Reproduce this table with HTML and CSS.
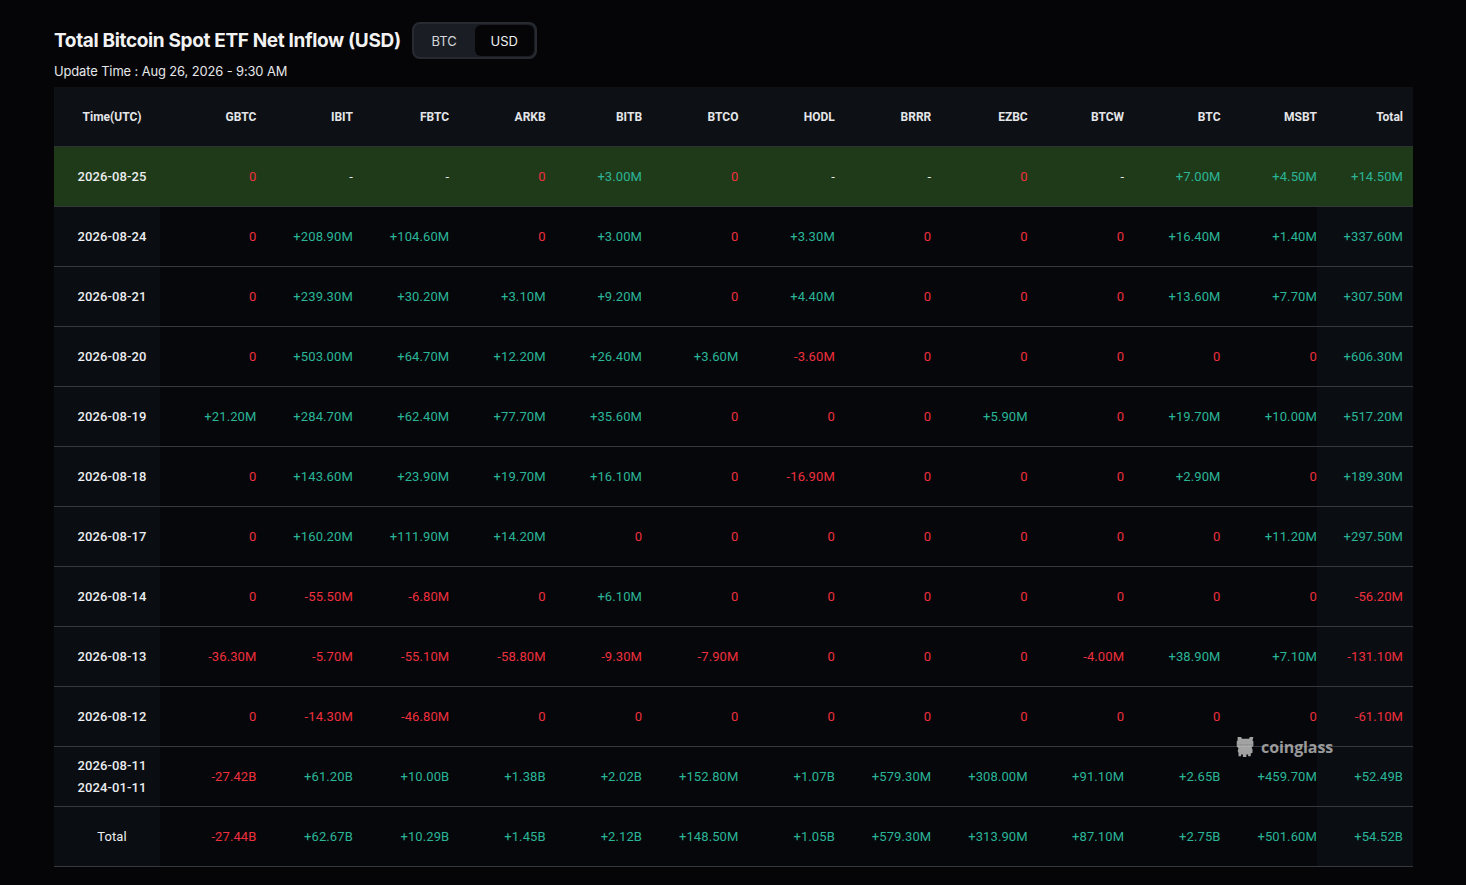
FILE: index.html
```html
<!DOCTYPE html>
<html lang="en">
<head>
<meta charset="utf-8">
<title>Total Bitcoin Spot ETF Net Inflow (USD)</title>
<link rel="stylesheet" href="styles.css">
</head>
<body>
<div class="page">
  <div class="head">
    <h1 class="title">Total Bitcoin Spot ETF Net Inflow (USD)</h1>
    <div class="toggle">
      <span class="opt">BTC</span>
      <span class="opt active">USD</span>
    </div>
  </div>
  <div class="update">Update Time : Aug 26, 2026 - 9:30 AM</div>
  <div class="table-wrap">
    <table class="etf">
      <colgroup>
        <col class="c-time">
        <col span="12" class="c-fund">
        <col class="c-total">
      </colgroup>
      <thead>
        <tr>
          <th class="time">Time(UTC)</th>
          <th>GBTC</th><th>IBIT</th><th>FBTC</th><th>ARKB</th><th>BITB</th><th>BTCO</th>
          <th>HODL</th><th>BRRR</th><th>EZBC</th><th>BTCW</th><th>BTC</th><th>MSBT</th>
          <th class="total">Total</th>
        </tr>
      </thead>
      <tbody>
        <tr class="today">
          <td class="time">2026-08-25</td>
          <td class="neg">0</td><td class="nil">-</td><td class="nil">-</td><td class="neg">0</td><td class="pos">+3.00M</td><td class="neg">0</td>
          <td class="nil">-</td><td class="nil">-</td><td class="neg">0</td><td class="nil">-</td><td class="pos">+7.00M</td><td class="pos">+4.50M</td>
          <td class="total pos">+14.50M</td>
        </tr>
        <tr>
          <td class="time">2026-08-24</td>
          <td class="neg">0</td><td class="pos">+208.90M</td><td class="pos">+104.60M</td><td class="neg">0</td><td class="pos">+3.00M</td><td class="neg">0</td>
          <td class="pos">+3.30M</td><td class="neg">0</td><td class="neg">0</td><td class="neg">0</td><td class="pos">+16.40M</td><td class="pos">+1.40M</td>
          <td class="total pos">+337.60M</td>
        </tr>
        <tr>
          <td class="time">2026-08-21</td>
          <td class="neg">0</td><td class="pos">+239.30M</td><td class="pos">+30.20M</td><td class="pos">+3.10M</td><td class="pos">+9.20M</td><td class="neg">0</td>
          <td class="pos">+4.40M</td><td class="neg">0</td><td class="neg">0</td><td class="neg">0</td><td class="pos">+13.60M</td><td class="pos">+7.70M</td>
          <td class="total pos">+307.50M</td>
        </tr>
        <tr>
          <td class="time">2026-08-20</td>
          <td class="neg">0</td><td class="pos">+503.00M</td><td class="pos">+64.70M</td><td class="pos">+12.20M</td><td class="pos">+26.40M</td><td class="pos">+3.60M</td>
          <td class="neg">-3.60M</td><td class="neg">0</td><td class="neg">0</td><td class="neg">0</td><td class="neg">0</td><td class="neg">0</td>
          <td class="total pos">+606.30M</td>
        </tr>
        <tr>
          <td class="time">2026-08-19</td>
          <td class="pos">+21.20M</td><td class="pos">+284.70M</td><td class="pos">+62.40M</td><td class="pos">+77.70M</td><td class="pos">+35.60M</td><td class="neg">0</td>
          <td class="neg">0</td><td class="neg">0</td><td class="pos">+5.90M</td><td class="neg">0</td><td class="pos">+19.70M</td><td class="pos">+10.00M</td>
          <td class="total pos">+517.20M</td>
        </tr>
        <tr>
          <td class="time">2026-08-18</td>
          <td class="neg">0</td><td class="pos">+143.60M</td><td class="pos">+23.90M</td><td class="pos">+19.70M</td><td class="pos">+16.10M</td><td class="neg">0</td>
          <td class="neg">-16.90M</td><td class="neg">0</td><td class="neg">0</td><td class="neg">0</td><td class="pos">+2.90M</td><td class="neg">0</td>
          <td class="total pos">+189.30M</td>
        </tr>
        <tr>
          <td class="time">2026-08-17</td>
          <td class="neg">0</td><td class="pos">+160.20M</td><td class="pos">+111.90M</td><td class="pos">+14.20M</td><td class="neg">0</td><td class="neg">0</td>
          <td class="neg">0</td><td class="neg">0</td><td class="neg">0</td><td class="neg">0</td><td class="neg">0</td><td class="pos">+11.20M</td>
          <td class="total pos">+297.50M</td>
        </tr>
        <tr>
          <td class="time">2026-08-14</td>
          <td class="neg">0</td><td class="neg">-55.50M</td><td class="neg">-6.80M</td><td class="neg">0</td><td class="pos">+6.10M</td><td class="neg">0</td>
          <td class="neg">0</td><td class="neg">0</td><td class="neg">0</td><td class="neg">0</td><td class="neg">0</td><td class="neg">0</td>
          <td class="total neg">-56.20M</td>
        </tr>
        <tr>
          <td class="time">2026-08-13</td>
          <td class="neg">-36.30M</td><td class="neg">-5.70M</td><td class="neg">-55.10M</td><td class="neg">-58.80M</td><td class="neg">-9.30M</td><td class="neg">-7.90M</td>
          <td class="neg">0</td><td class="neg">0</td><td class="neg">0</td><td class="neg">-4.00M</td><td class="pos">+38.90M</td><td class="pos">+7.10M</td>
          <td class="total neg">-131.10M</td>
        </tr>
        <tr>
          <td class="time">2026-08-12</td>
          <td class="neg">0</td><td class="neg">-14.30M</td><td class="neg">-46.80M</td><td class="neg">0</td><td class="neg">0</td><td class="neg">0</td>
          <td class="neg">0</td><td class="neg">0</td><td class="neg">0</td><td class="neg">0</td><td class="neg">0</td><td class="neg">0</td>
          <td class="total neg">-61.10M</td>
        </tr>
        <tr>
          <td class="time range">2026-08-11<br>2024-01-11</td>
          <td class="neg">-27.42B</td><td class="pos">+61.20B</td><td class="pos">+10.00B</td><td class="pos">+1.38B</td><td class="pos">+2.02B</td><td class="pos">+152.80M</td>
          <td class="pos">+1.07B</td><td class="pos">+579.30M</td><td class="pos">+308.00M</td><td class="pos">+91.10M</td><td class="pos">+2.65B</td><td class="pos">+459.70M</td>
          <td class="total pos">+52.49B</td>
        </tr>
        <tr>
          <td class="time label">Total</td>
          <td class="neg">-27.44B</td><td class="pos">+62.67B</td><td class="pos">+10.29B</td><td class="pos">+1.45B</td><td class="pos">+2.12B</td><td class="pos">+148.50M</td>
          <td class="pos">+1.05B</td><td class="pos">+579.30M</td><td class="pos">+313.90M</td><td class="pos">+87.10M</td><td class="pos">+2.75B</td><td class="pos">+501.60M</td>
          <td class="total pos">+54.52B</td>
        </tr>
      </tbody>
    </table>
    <div class="watermark">
      <svg class="wm-icon" viewBox="0 0 24 28" width="21" height="25" aria-hidden="true">
        <path fill="#c9c9c9" d="M3 3h4l1 2h8l1-2h4l-1 4 1 1v5l-2 2 1 2v4l-2 1v3h-3v-2h-2v3H9v-3H7v2H4v-4l-1-2 1-3-2-2V8l1-1z"/>
        <path fill="none" stroke="#8a8a8a" stroke-width="0.8" stroke-dasharray="1 1" d="M2 12h20"/>
      </svg>
      <span class="wm-text">coinglass</span>
    </div>
  </div>
</div>
</body>
</html>
```

FILE: styles.css
```css
html, body {
  margin: 0;
  padding: 0;
  background: #050508;
}

body {
  font-family: Roboto, "Liberation Sans", sans-serif;
  color: #e8e9eb;
}

.page {
  padding: 22px 0 0 54px;
  width: 1359px;
}

.head {
  display: flex;
  align-items: center;
  gap: 11px;
  height: 37px;
}

.title {
  margin: 0;
  font-family: Inter, "Open Sans", sans-serif;
  font-size: 19px;
  font-weight: 700;
  letter-spacing: -0.35px;
  color: #f2f2f2;
}

.toggle {
  display: flex;
  align-items: stretch;
  height: 33px;
  border: 2px solid #272b31;
  border-radius: 8px;
  background: #1a1e24;
  box-sizing: content-box;
}

.opt {
  display: flex;
  align-items: center;
  justify-content: center;
  width: 61px;
  font-family: Inter, Roboto, sans-serif;
  font-size: 13px;
  color: #d4d6d9;
}

.opt.active {
  width: 59px;
  margin: 1px 1px 1px 0;
  background: #050508;
  border-radius: 6px;
  color: #f0f0f0;
}

.update {
  margin-top: 0;
  height: 28px;
  line-height: 25px;
  font-family: Inter, Roboto, sans-serif;
  font-size: 12.9px;
  letter-spacing: -0.1px;
  color: #e6e7e9;
}

.table-wrap {
  position: relative;
}

.etf {
  width: 1359px;
  table-layout: fixed;
  border-collapse: collapse;
  border-spacing: 0;
}

.c-time { width: 106px; }
.c-fund { width: 96.4px; }
.c-total { width: 96px; }

.etf th,
.etf td {
  height: 59px;
  padding: 0;
  text-align: right;
  white-space: nowrap;
  border-bottom: 1px solid #36383d;
  background: #06070b;
}

.etf th {
  background: #0d1014;
  font-size: 12px;
  font-weight: 700;
  color: #e4e6e9;
  border-bottom-color: #2f3235;
  line-height: 14px;
}

.etf td {
  font-size: 13px;
  font-weight: 400;
  letter-spacing: 0.1px;
}

.etf th.time,
.etf td.time {
  text-align: center;
  padding-left: 10px;
  background: #0a0d12;
}

.etf th.time {
  background: #0d1014;
}

.etf td.time {
  font-weight: 500;
  color: #eceef0;
}

.etf td.range {
  line-height: 22px;
}

.etf td.label {
  font-weight: 400;
}

.etf .total {
  padding-right: 10px;
}

.etf td.total {
  background: #0a0d12;
}

.etf th.total {
  background: #0d1014;
}

.etf tr.today td {
  background: #1f3a19;
}

.pos { color: #2bb597; }
.neg { color: #ee2f3d; }
.nil { color: #e8e9eb; }

.watermark {
  position: absolute;
  left: 1181px;
  top: 647px;
  display: flex;
  align-items: center;
  gap: 5px;
  opacity: 0.8;
  pointer-events: none;
}

.wm-text {
  font-family: "Open Sans", Roboto, sans-serif;
  font-size: 16px;
  font-weight: 700;
  color: #bdbdbd;
  letter-spacing: -0.1px;
}
```
